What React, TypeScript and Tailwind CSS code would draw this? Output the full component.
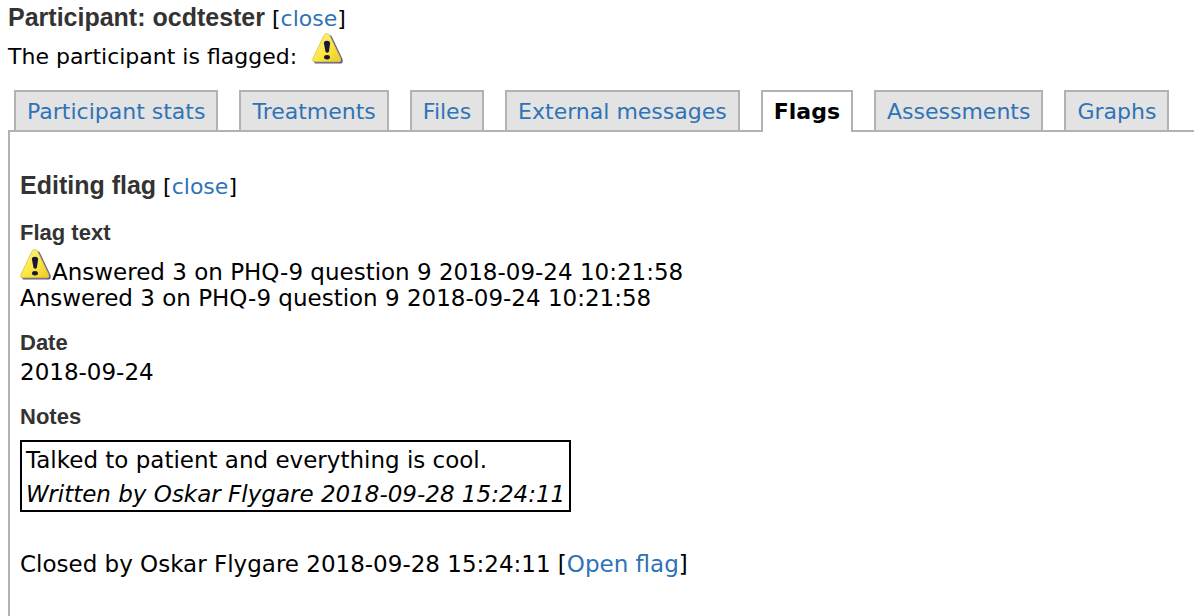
import React from "react";

const tabs = [
  "Participant stats",
  "Treatments",
  "Files",
  "External messages",
  "Flags",
  "Assessments",
  "Graphs",
];

function WarningIcon({ id }: { id: string }) {
  return (
    <svg
      className="inline-block h-[31px] w-8 align-baseline"
      viewBox="0 0 32 31"
      role="img"
      aria-label="Warning"
    >
      <defs>
        <linearGradient id={id} x1="0" y1="0" x2="1" y2="1">
          <stop offset="0" stopColor="#fff58a" />
          <stop offset="0.55" stopColor="#fbe640" />
          <stop offset="1" stopColor="#ecca28" />
        </linearGradient>
      </defs>
      <path
        d="M16.5 1.5 L19.5 3 L30.5 26 Q31.5 30.5 28.5 30.5 L3 30.5 L1.5 28 Z"
        fill="#5c5a88"
      />
      <path
        d="M14.8 0.6 Q16.8 0.6 17.8 2.8 L28.6 25.4 Q29.8 28.8 27 28.8 L2.6 28.8 Q-0.2 28.8 1 25.4 L11.8 2.8 Q12.8 0.6 14.8 0.6 Z"
        fill={`url(#${id})`}
        stroke="#d9c04a"
        strokeWidth="0.8"
      />
      <path
        d="M11.9 10 Q11.9 7.8 15 7.8 Q18.1 7.8 18.1 10.5 L16.9 18.6 Q15.2 21 13.5 18.6 Z"
        fill="#17163c"
      />
      <ellipse cx="15" cy="24.2" rx="2.9" ry="2.2" fill="#17163c" />
    </svg>
  );
}

function TextLink({ children }: { children: React.ReactNode }) {
  return (
    <a href="#" className="text-[#2f73b7]">
      {children}
    </a>
  );
}

export default function App() {
  return (
    <div className="min-h-screen flex flex-col bg-white pt-[5px] pl-2 font-['Verdana','DejaVu_Sans',sans-serif] text-[22px] leading-[26px] text-black">
      <header>
        <div>
          <h1 className="inline font-['Liberation_Sans',Arial,sans-serif] text-[25px] leading-6 font-bold text-[#333]">
            Participant: ocdtester
          </h1>{" "}
          [<TextLink>close</TextLink>]
        </div>
        <p className="mt-px">
          <span className="mr-2">The participant is flagged:</span>{" "}
          <WarningIcon id="warn-header" />
        </p>
      </header>

      <nav className="mt-5 flex gap-[21px] pl-[6px]">
        {tabs.map((tab) =>
          tab === "Flags" ? (
            <a
              key={tab}
              href="#"
              aria-current="page"
              className="relative -mb-[2px] whitespace-nowrap border-2 border-b-0 border-[#b2b2b2] bg-white px-[11px] pt-[7px] pb-[7px] font-bold"
            >
              {tab}
            </a>
          ) : (
            <a
              key={tab}
              href="#"
              className="whitespace-nowrap border-2 border-b-0 border-[#b2b2b2] bg-[#e3e3e3] px-[11px] pt-[7px] pb-[5px] text-[#2f73b7]"
            >
              {tab}
            </a>
          )
        )}
      </nav>

      <main className="flex-1 border-t-2 border-l-2 border-[#b2b2b2] pt-[41px] pl-[10px]">
        <div>
          <h2 className="inline font-['Liberation_Sans',Arial,sans-serif] text-[25px] leading-6 font-bold text-[#333]">
            Editing flag
          </h2>{" "}
          [<TextLink>close</TextLink>]
        </div>

        <section className="mt-5">
          <h3 className="font-['Liberation_Sans',Arial,sans-serif] font-bold text-[#333]">
            Flag text
          </h3>
          <p className="mt-[3px] text-[23px]">
            <WarningIcon id="warn-flag" />
            Answered 3 on PHQ-9 question 9 2018-09-24 10:21:58
            <br />
            Answered 3 on PHQ-9 question 9 2018-09-24 10:21:58
          </p>
        </section>

        <section className="mt-[19px]">
          <h3 className="font-['Liberation_Sans',Arial,sans-serif] font-bold text-[#333]">
            Date
          </h3>
          <p className="mt-[3px] text-[23px]">2018-09-24</p>
        </section>

        <section className="mt-[19px]">
          <h3 className="font-['Liberation_Sans',Arial,sans-serif] font-bold text-[#333]">
            Notes
          </h3>
          <div className="mt-[10px] w-fit border-2 border-black px-1 pt-[5px] pb-[3px] text-[23px]">
            <p>Talked to patient and everything is cool.</p>
            <p className="mt-2 italic">
              Written by Oskar Flygare 2018-09-28 15:24:11
            </p>
          </div>
        </section>

        <p className="mt-[39px] text-[23px]">
          Closed by Oskar Flygare 2018-09-28 15:24:11 [
          <TextLink>Open flag</TextLink>]
        </p>
      </main>
    </div>
  );
}
